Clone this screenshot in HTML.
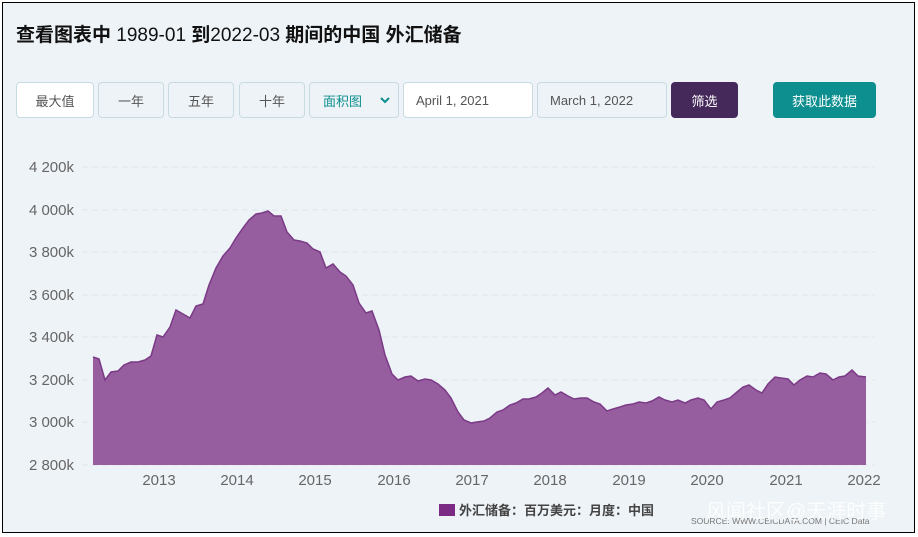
<!DOCTYPE html>
<html><head><meta charset="utf-8"><style>
body{margin:0;background:#fff;font-family:"Liberation Sans","Noto Sans CJK SC",sans-serif;}
#w{position:absolute;left:2px;top:2px;width:911px;height:529px;border:1px solid #000;background:#eef3f7;overflow:hidden}
h1{position:absolute;left:13px;top:17px;margin:0;font-size:19px;font-weight:bold;color:#111;letter-spacing:0}
.b{position:absolute;top:79px;height:36px;box-sizing:border-box;border:1px solid #c8dbe3;border-radius:4px;font-size:13px;color:#555;display:flex;align-items:center;justify-content:center;background:#eef3f7}
</style></head><body><div id="w">
<h1>查看图表中 <span style="font-weight:normal">1989-01</span> 到<span style="font-weight:normal">2022-03</span> 期间的中国 外汇储备</h1>
<div class="b" style="left:13px;width:78px;background:#fff">最大值</div>
<div class="b" style="left:95px;width:66px">一年</div>
<div class="b" style="left:165px;width:66px">五年</div>
<div class="b" style="left:236px;width:66px">十年</div>
<div class="b" style="left:306px;width:90px;justify-content:flex-start;padding-left:13px;color:#0e8f8f">面积图<svg style="position:absolute;right:8px;top:14px" width="10" height="7" viewBox="0 0 10 7"><path d="M1 1l4 4 4-4" stroke="#0e8f8f" stroke-width="2" fill="none"/></svg></div>
<div class="b" style="left:400px;width:130px;background:#fff;justify-content:flex-start;padding-left:12px">April 1, 2021</div>
<div class="b" style="left:534px;width:130px;justify-content:flex-start;padding-left:12px">March 1, 2022</div>
<div class="b" style="left:668px;width:67px;background:#44295a;border-color:#44295a;color:#fff">筛选</div>
<div class="b" style="left:770px;width:103px;background:#0e8f8f;border-color:#0e8f8f;color:#fff">获取此数据</div>
<svg style="position:absolute;left:-3px;top:-3px" width="918" height="537">
<g stroke="#dde5ea" stroke-dasharray="6,4" stroke-width="1">
<line x1="82" x2="875" y1="167" y2="167"/><line x1="82" x2="875" y1="210" y2="210"/><line x1="82" x2="875" y1="252" y2="252"/><line x1="82" x2="875" y1="295" y2="295"/><line x1="82" x2="875" y1="337" y2="337"/><line x1="82" x2="875" y1="380" y2="380"/><line x1="82" x2="875" y1="422" y2="422"/><line x1="82" x2="875" y1="465" y2="465"/></g>
<g font-size="15" fill="#666" text-anchor="end" font-family="Liberation Sans,sans-serif">
<text x="74" y="172">4 200k</text><text x="74" y="215">4 000k</text><text x="74" y="257">3 800k</text><text x="74" y="300">3 600k</text><text x="74" y="342">3 400k</text><text x="74" y="385">3 200k</text><text x="74" y="427">3 000k</text><text x="74" y="470">2 800k</text></g>
<polygon fill="#965e9e" points="93,465 93,357 99,359 105,380 111,372 118,371 124,365 131,362 138,362 145,360 151,356 157,335 163,337 170,327 176,310 183,314 190,318 196,306 203,304 209,285 216,268 223,256 230,248 236,238 243,228 249,220 256,214 262,213 268,211 274,216 281,216 287,232 294,240 300,241 307,243 313,249 320,252 326,268 333,264 340,272 346,276 353,285 359,303 366,313 372,311 379,330 385,355 392,374 398,380 405,377 411,376 418,381 425,379 431,380 438,384 445,390 451,398 458,412 464,420 471,423 477,422 484,421 490,418 497,412 503,410 510,405 516,403 523,399 529,399 536,397 542,393 548,388 555,395 561,392 568,396 574,399 581,398 587,398 594,402 600,404 607,411 613,409 620,407 626,405 633,404 639,402 646,403 652,401 659,397 665,400 672,402 678,400 685,403 691,400 698,398 704,400 711,409 717,402 724,400 730,398 737,392 743,387 749,385 756,390 762,393 768,384 775,377 781,378 788,379 794,385 800,380 807,376 813,377 820,373 826,374 833,380 839,377 845,376 852,370 858,376 866,377 866,465"/>
<polyline fill="none" stroke="#7b3a87" stroke-width="1.5" points="93,357 99,359 105,380 111,372 118,371 124,365 131,362 138,362 145,360 151,356 157,335 163,337 170,327 176,310 183,314 190,318 196,306 203,304 209,285 216,268 223,256 230,248 236,238 243,228 249,220 256,214 262,213 268,211 274,216 281,216 287,232 294,240 300,241 307,243 313,249 320,252 326,268 333,264 340,272 346,276 353,285 359,303 366,313 372,311 379,330 385,355 392,374 398,380 405,377 411,376 418,381 425,379 431,380 438,384 445,390 451,398 458,412 464,420 471,423 477,422 484,421 490,418 497,412 503,410 510,405 516,403 523,399 529,399 536,397 542,393 548,388 555,395 561,392 568,396 574,399 581,398 587,398 594,402 600,404 607,411 613,409 620,407 626,405 633,404 639,402 646,403 652,401 659,397 665,400 672,402 678,400 685,403 691,400 698,398 704,400 711,409 717,402 724,400 730,398 737,392 743,387 749,385 756,390 762,393 768,384 775,377 781,378 788,379 794,385 800,380 807,376 813,377 820,373 826,374 833,380 839,377 845,376 852,370 858,376 866,377"/>
<g font-size="15" fill="#666" text-anchor="middle" font-family="Liberation Sans,sans-serif">
<text x="159" y="485">2013</text><text x="237" y="485">2014</text><text x="315" y="485">2015</text><text x="394" y="485">2016</text><text x="472" y="485">2017</text><text x="550" y="485">2018</text><text x="629" y="485">2019</text><text x="707" y="485">2020</text><text x="786" y="485">2021</text><text x="864" y="485">2022</text></g>
<rect x="439" y="504" width="16" height="12" fill="#7b2b83"/>
<text x="459" y="515" font-size="13" font-weight="bold" fill="#444">外汇储备：百万美元：月度：中国</text>
<text x="691" y="524" font-size="8.5" fill="#777">SOURCE: WWW.CEICDATA.COM | CEIC Data</text>
<text x="706" y="518" font-size="20" fill="#fff" opacity="0.85">风闻社区@天涯时事</text>
</svg>
</div></body></html>
